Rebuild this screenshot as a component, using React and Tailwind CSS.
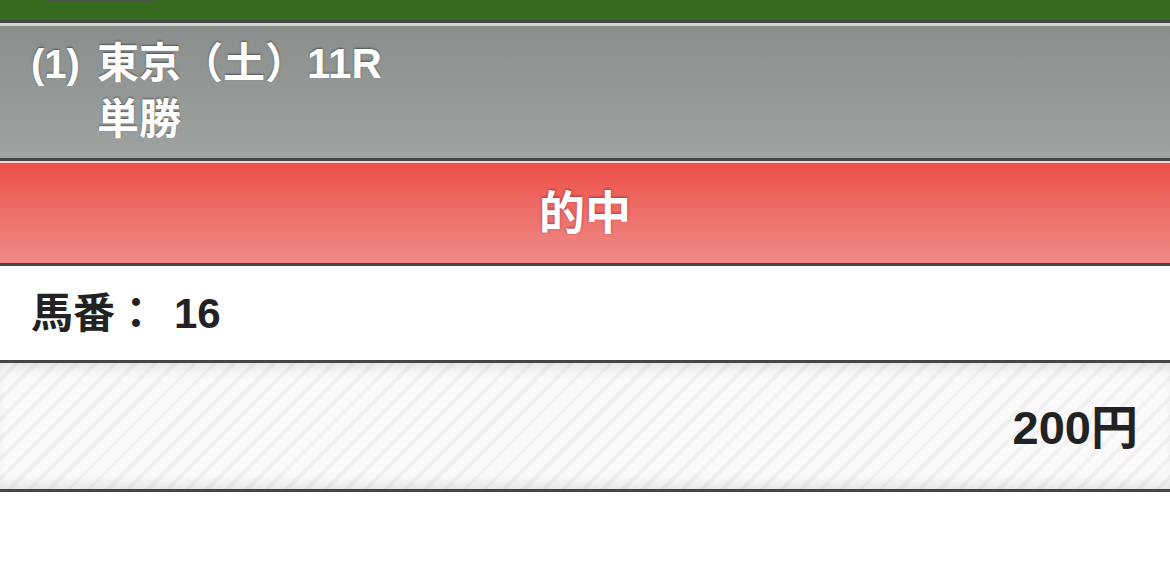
const font = "font-['Liberation_Sans','Noto_Sans_CJK_JP',sans-serif]";

const Header = () => (
  <div className="bg-gradient-to-b from-[#8a8f8d] to-[#9ea3a1] pl-[31px] py-[10px] flex">
    <div className="w-[66px] text-[40px] leading-[56px] font-bold text-white [text-shadow:0_-1px_2px_rgba(0,0,0,0.45)]">
      (1)
    </div>
    <div className="text-[42px] leading-[56px] font-bold text-white [text-shadow:0_-1px_2px_rgba(0,0,0,0.45)]">
      <div>東京（土）11R</div>
      <div>単勝</div>
    </div>
  </div>
);

export default function App() {
  return (
    <div className={`w-[1170px] h-[576px] bg-white overflow-hidden ${font}`}>
      <div className="h-[20px] bg-[#356a1f] relative">
        <div className="absolute left-[45px] top-[-30px] w-[112px] h-[32px] rounded-[8px] bg-[#e4e4e2] border-2 border-[#4f4f4f]" />
      </div>
      <div className="h-[3px] bg-[#454a48]" />
      <div className="h-[3px] bg-[#d2d3cf]" />
      <Header />
      <div className="h-[3px] bg-[#454545]" />
      <div className="h-[2px] bg-[#f6d3d0]" />
      <div className="h-[100px] bg-gradient-to-b from-[#eb4e47] to-[#ef8b89] flex items-center justify-center">
        <span className="text-[46px] font-bold text-white [text-shadow:0_-1px_3px_rgba(120,0,0,0.5)]">
          的中
        </span>
      </div>
      <div className="h-[3px] bg-[#454545]" />
      <div className="h-[94px] bg-white flex items-center pl-[31px]">
        <span className="text-[42px] font-bold text-[#222]">馬番：</span>
        <span className="ml-[17px] text-[42px] font-bold text-[#222]">16</span>
      </div>
      <div className="h-[3px] bg-[#454545]" />
      <div className="h-[126px] flex items-center justify-end pr-[32px] pt-[4px] bg-[repeating-linear-gradient(135deg,#fafafa_0px,#fafafa_10px,#f1f1f1_10px,#f1f1f1_14px)] shadow-[inset_0_12px_14px_-8px_rgba(0,0,0,0.10),inset_0_-12px_14px_-8px_rgba(0,0,0,0.10)]">
        <span className="text-[47px] font-bold text-[#222]">200円</span>
      </div>
      <div className="h-[3px] bg-[#454545]" />
    </div>
  );
}
